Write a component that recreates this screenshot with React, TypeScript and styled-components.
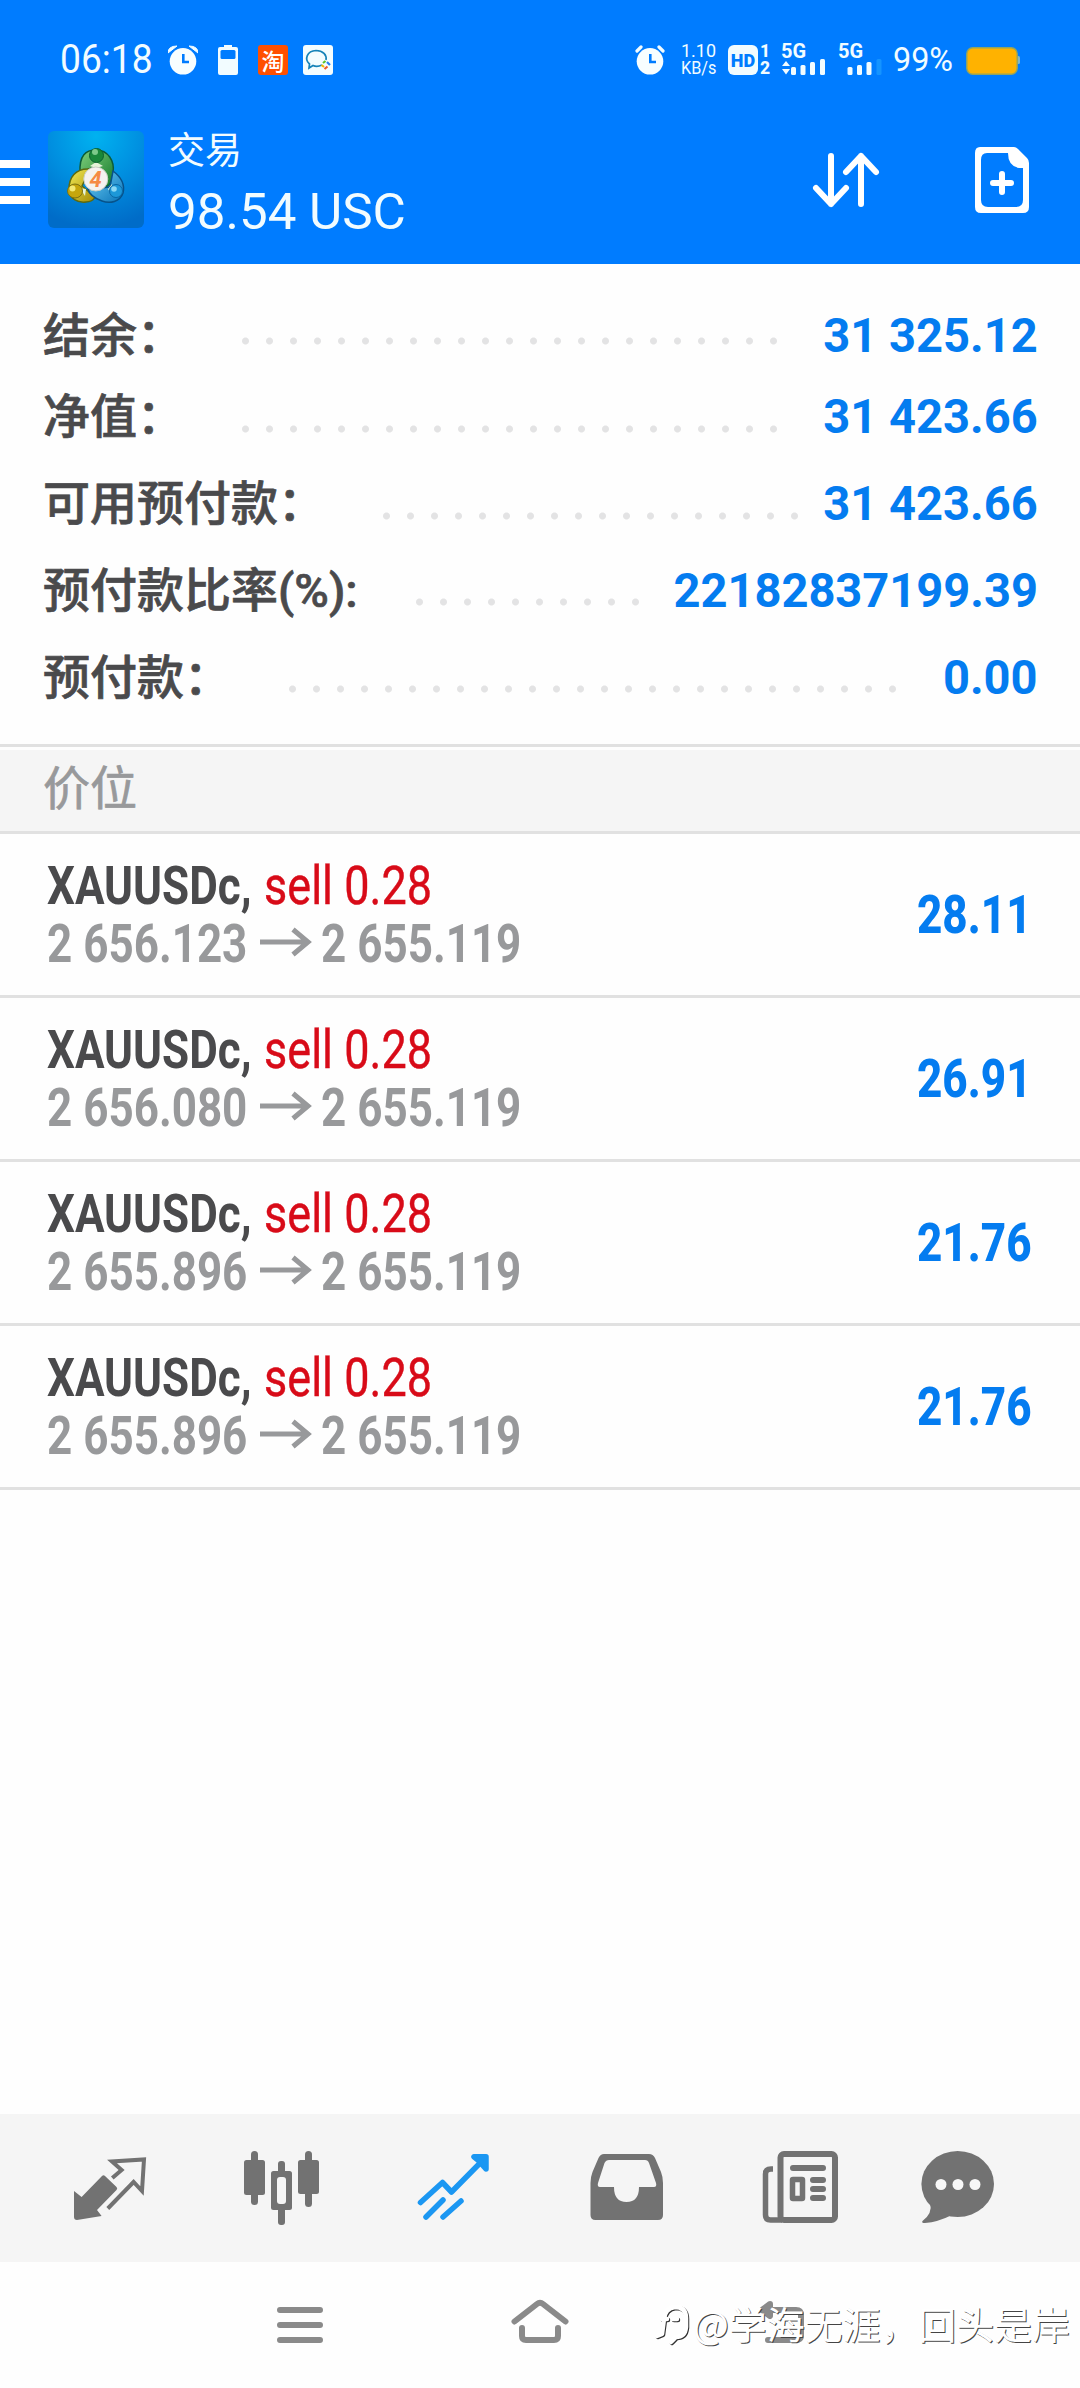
import React from "react";
import styled, { createGlobalStyle } from "styled-components";

const GlobalStyle = createGlobalStyle`
  * { box-sizing: border-box; }
  body { margin: 0; background: #fefefe; }
`;

const Screen = styled.div`
  position: relative;
  width: 1080px;
  height: 2388px;
  display: flex;
  flex-direction: column;
  background: #fefefe;
  overflow: hidden;
  font-family: Roboto, "Noto Sans CJK SC", sans-serif;
`;

const TopArea = styled.header`
  height: 264px;
  background: #007cff;
  color: #f2fcff;
  display: flex;
  flex-direction: column;
`;

const StatusBar = styled.div`
  height: 119px;
  padding: 0 60px 0 60px;
  display: flex;
  align-items: center;
  justify-content: space-between;
`;

const StatusGroup = styled.div`
  display: flex;
  align-items: center;
  height: 30px;
`;

const Fit = styled.span<{ $w: number; $sx?: number }>`
  display: block;
  width: ${(p) => p.$w}px;
  white-space: pre;
  transform: scaleX(${(p) => p.$sx ?? 1});
  transform-origin: left center;
`;

const Clock = styled(Fit)`
  font-size: 40px;
  line-height: 30px;
`;

const StatusIcon = styled.svg<{ $ml: number }>`
  display: block;
  flex: none;
  margin-left: ${(p) => p.$ml}px;
`;

const AppBadge = styled.div<{ $bg: string; $ml: number }>`
  width: 30px;
  height: 30px;
  margin-left: ${(p) => p.$ml}px;
  border-radius: 3px;
  background: ${(p) => p.$bg};
  display: flex;
  align-items: center;
  justify-content: center;
  font: 500 23px/30px "Noto Sans CJK SC", sans-serif;
  color: #fff;
`;

const Speed = styled.div`
  width: 47px;
  height: 34px;
  margin-left: 16px;
  font-size: 18.5px;
  line-height: 17px;
`;

const HdBadge = styled.div`
  width: 30px;
  height: 30px;
  border-radius: 6px;
  background: #f2fcff;
  color: #007cff;
  font: 900 18px/31px Roboto, sans-serif;
  display: flex;
  justify-content: center;
`;

const SimPair = styled.div`
  width: 23px;
  height: 34px;
  padding-left: 2px;
  font: 800 17.5px/17px Roboto, sans-serif;
  text-align: left;
`;

const Network = styled.div<{ $w: number }>`
  width: ${(p) => p.$w}px;
  height: 32px;
  display: flex;
  flex-direction: column;
  font: 700 20px/15px Roboto, sans-serif;
  svg { display: block; margin-top: 1px; overflow: visible; flex: none; }
`;

const Percent = styled(Fit)`
  font-size: 33px;
  line-height: 32px;
`;

const TitleBar = styled.div`
  height: 145px;
  display: flex;
  align-items: flex-start;
`;

const MenuButton = styled.div`
  width: 30px;
  margin-top: 41px;
  display: flex;
  flex-direction: column;
  gap: 10px;
  i { display: block; height: 8px; background: #fff; }
`;

const LogoSlot = styled.div`
  width: 96px;
  height: 97px;
  margin: 12px 0 0 18px;
`;

const TitleText = styled.div`
  flex: 1;
  padding: 6px 0 0 24px;
`;

const TitleName = styled.div`
  font: 400 37px/46px "Noto Sans CJK SC", sans-serif;
`;

const TitleSum = styled(Fit)`
  margin-top: 15px;
  font-size: 50px;
  line-height: 52px;
`;

const SortIcon = styled.svg`
  margin-top: 31px;
  margin-right: 93px;
`;

const DocIcon = styled.svg`
  margin-top: 27px;
  margin-right: 48px;
`;

const Summary = styled.section`
  height: 480px;
  padding: 31px 42px 0 43px;
`;

const SummaryRow = styled.div<{ $h: number }>`
  height: ${(p) => p.$h}px;
  display: flex;
  align-items: flex-start;
`;

const Label = styled.div`
  font-size: 47px;
  line-height: 82px;
  font-weight: 500;
  color: #4a4a4c;
  -webkit-text-stroke: 0.7px #4a4a4c;
  white-space: nowrap;
  height: 80px;
`;

const Dots = styled.div<{ $n: number; $top: number; $ml: number }>`
  flex: none;
  width: ${(p) => p.$n * 24}px;
  height: 8px;
  margin-top: ${(p) => p.$top}px;
  margin-left: ${(p) => p.$ml}px;
  background: radial-gradient(circle at 3.5px 4px, #e3e3e4 3px, transparent 4px) 0 0 / 24px 8px repeat-x;
`;

const Amount = styled.div`
  margin-left: auto;
  font-size: 48px;
  font-weight: 700;
  line-height: 82px;
  color: #047cf0;
  white-space: pre;
  transform: scaleX(0.98);
  transform-origin: right center;
`;

const SectionHead = styled.div`
  height: 90px;
  border-top: 3px solid #e1e1e1;
  border-bottom: 3px solid #e1e1e1;
  padding: 3px 0 0;
  background: #f5f5f5;
  background-clip: content-box;
  color: #98999b;
  font: 400 47px/69px "Noto Sans CJK SC", sans-serif;
  -webkit-text-stroke: 0.7px #98999b;
  span { display: block; margin-left: 43px; height: 70px; }
`;

const TradeRow = styled.div`
  height: 164px;
  border-bottom: 3px solid #e1e1e1;
  padding: 23px 42px 0 47px;
  display: flex;
  justify-content: space-between;
`;

const TradeText = styled.div`
  font-size: 53px;
  line-height: 58px;
  font-weight: 700;
`;

const TradeLine = styled.div`
  height: 58px;
  display: flex;
  align-items: center;
  color: #98999b;
`;

const Arrow = styled.svg`
  display: block;
  flex: none;
  margin: 0 8px 5px 0;
`;

const Symbol = styled(Fit)`
  color: #4a4a4c;
`;

const Side = styled(Fit)`
  color: #d80b18;
  font-weight: 400;
  -webkit-text-stroke: 0.4px #d80b18;
`;

const Profit = styled(Fit)`
  margin-top: 27px;
  font-size: 53px;
  font-weight: 800;
  line-height: 62px;
  color: #047cf0;
`;

const Spacer = styled.div`
  flex: 1;
`;

const TabBar = styled.nav`
  height: 148px;
  background: #f5f5f5;
  padding: 24px 0 0 62px;
  display: flex;
  gap: 76px;
  color: #727272;
  svg { display: block; flex: none; overflow: visible; }
`;

const SystemNav = styled.div`
  height: 126px;
  padding: 32px 0 0 270px;
  display: flex;
  gap: 180px;
  color: #8a8a8a;
  svg { display: block; flex: none; }
`;

const Watermark = styled.div`
  position: absolute;
  left: 654px;
  top: 2295px;
  height: 56px;
  display: flex;
  align-items: center;
  color: #fff;
  font: 400 37.9px/56px "Noto Sans CJK SC", sans-serif;
  white-space: nowrap;
  text-shadow: 1px 1px 0 #444;
  svg { display: block; }
`;

const Alarm = ({ ml, small }: { ml: number; small?: boolean }) => (
  <StatusIcon $ml={ml} width="30" height="30" viewBox="0 0 30 30">
    {small ? (
      <path d="M2 6 L6 2 M28 6 L24 2" stroke="#f2fcff" strokeWidth="3.2" strokeLinecap="round" />
    ) : (
      <path d="M0 8 Q0 1 9 1 Z M30 8 Q30 1 21 1 Z" fill="#f2fcff" stroke="#f2fcff" />
    )}
    <circle cx="15" cy="16.3" r={small ? 13.3 : 14} fill="#007cff" />
    <circle cx="15" cy="16.3" r="13.3" fill="#f8feff" />
    <path d="M15.3 9 V17 H21" fill="none" stroke="#007cff" strokeWidth="2.6" />
  </StatusIcon>
);

const Logo = () => (
  <svg width="96" height="97" viewBox="0 0 96 97">
    <defs>
      <radialGradient id="tile" cx="0.5" cy="0.05" r="0.95">
        <stop offset="0" stopColor="#00b2f0" />
        <stop offset="0.5" stopColor="#008fe0" />
        <stop offset="1" stopColor="#006cc8" />
      </radialGradient>
      <linearGradient id="green" x1="0" y1="0" x2="1" y2="1">
        <stop offset="0" stopColor="#7fd07c" />
        <stop offset="1" stopColor="#157a2c" />
      </linearGradient>
      <linearGradient id="gold" x1="0" y1="0" x2="1" y2="1">
        <stop offset="0" stopColor="#f2ea55" />
        <stop offset="1" stopColor="#a38a04" />
      </linearGradient>
      <linearGradient id="sky" x1="0" y1="0" x2="1" y2="1">
        <stop offset="0" stopColor="#6fd0f5" />
        <stop offset="1" stopColor="#0872b8" />
      </linearGradient>
    </defs>
    <rect width="96" height="97" rx="6" fill="url(#tile)" />
    <path d="M32 42 C31 24 38 19 48 19 C60 19 67 30 65 42 C64 52 60 56 56 56 L50 34 Z" fill="url(#green)" stroke="#0c5c38" strokeWidth="1.5" />
    <path d="M42 38 C27 37 21 47 21 58 C21 68 30 72 38 71 C44 71 46 68 47 66 L34 55 Z" fill="url(#gold)" stroke="#5c6a10" strokeWidth="1.5" />
    <path d="M65 40 C73 46 77 54 75 62 C72 71 62 73 54 70 C46 67 41 63 40 58 L62 56 Z" fill="url(#sky)" stroke="#07528a" strokeWidth="1.5" />
    <path d="M42 35 L48 31 L55 35 L48 37 Z M32 57 L38 58 L37 65 Z M60 58 L64 53 L63 63 Z" fill="#e4f3d8" />
    <circle cx="48.500" cy="24.500" r="7" fill="#19873a" stroke="#0c6030" />
    <circle cx="47" cy="21" r="3" fill="#7cc98a" />
    <ellipse cx="27" cy="60" rx="7.500" ry="7" fill="#c5a60c" stroke="#7b7110" />
    <circle cx="24.500" cy="57.500" r="3" fill="#f2e873" />
    <circle cx="68" cy="60" r="6.500" fill="#1d98d8" stroke="#0866a5" />
    <circle cx="66" cy="58" r="2.800" fill="#8ad8f5" />
    <circle cx="47.800" cy="48" r="12" fill="#f5f2f0" stroke="#c9cfc4" />
    <text x="47.500" y="56" textAnchor="middle" fontFamily="Roboto, sans-serif" fontSize="22" fontWeight="700" fontStyle="italic" fill="#f58a45">4</text>
  </svg>
);

const summary = [
  { label: "结余：", value: "31 325.12", h: 81, dots: 23, top: 42, ml: 58 },
  { label: "净值：", value: "31 423.66", h: 87, dots: 23, top: 49, ml: 58 },
  { label: "可用预付款：", value: "31 423.66", h: 87, dots: 18, top: 49, ml: 58 },
  { label: "预付款比率(%):", value: "22182837199.39", h: 87, dots: 10, top: 48, ml: 58 },
  { label: "预付款：", value: "0.00", h: 87, dots: 26, top: 48, ml: 58 },
];

const trades = [
  { open: "2 656.123", profit: "28.11" },
  { open: "2 656.080", profit: "26.91" },
  { open: "2 655.896", profit: "21.76" },
  { open: "2 655.896", profit: "21.76" },
];

export default function App() {
  return (
    <Screen>
      <GlobalStyle />
      <TopArea>
        <StatusBar>
          <StatusGroup>
            <Clock $w={92} $sx={0.93}>06:18</Clock>
            <Alarm ml={16} />
            <StatusIcon $ml={20} width="20" height="30" viewBox="0 0 20 30">
              <path d="M6 0 H14 V2 H18 Q20 2 20 4 V28 Q20 30 18 30 H2 Q0 30 0 28 V4 Q0 2 2 2 H6 Z" fill="#f2fcff" />
              <rect x="2.500" y="5" width="15" height="9" rx="1.500" fill="#007cff" />
            </StatusIcon>
            <AppBadge $bg="#ff5000" $ml={20}>淘</AppBadge>
            <AppBadge $bg="#f4fdff" $ml={15}>
              <svg width="30" height="30" viewBox="0 0 30 30">
                <path d="M19 20 Q14 22.500 10 20.500 L6 23 L6.500 19 C1 14 4 6 13 5.500 C20 5.500 24 10 23 15" fill="none" stroke="#1683b8" strokeWidth="1.700" />
                <path d="M20 18 L22.500 16" stroke="#5cc22c" strokeWidth="2.200" />
                <path d="M24 17 L27 20" stroke="#2a7ff0" strokeWidth="2.200" />
                <path d="M18.500 20 L21 22" stroke="#f5b400" strokeWidth="2.200" />
                <path d="M21.500 24 L24.500 21.500" stroke="#f0562c" strokeWidth="2.200" />
              </svg>
            </AppBadge>
          </StatusGroup>
          <StatusGroup>
            <Alarm ml={0} small />
            <Speed>
              <Fit $w={47} $sx={0.97}>1.10</Fit>
              <Fit $w={47} $sx={0.88}>KB/s</Fit>
            </Speed>
            <HdBadge>HD</HdBadge>
            <SimPair>
              <div>1</div>
              <div>2</div>
            </SimPair>
            <Network $w={57}>
              5G
              <svg width="45" height="15" viewBox="0 0 45 15" fill="#f2fcff">
                <path d="M5 1 L9 6 H1 Z M1 9 H9 L5 14.500 Z" />
                <rect x="10" y="7" width="5" height="8" rx="1.500" />
                <rect x="19.500" y="5" width="5" height="10" rx="1.500" />
                <rect x="29" y="2" width="5" height="13" rx="1.500" />
                <rect x="39" y="-1" width="5" height="16" rx="1.500" />
              </svg>
            </Network>
            <Network $w={55}>
              5G
              <svg width="45" height="15" viewBox="0 0 45 15" fill="#f2fcff">
                <rect x="9.500" y="7" width="5" height="8" rx="1.500" />
                <rect x="19" y="5" width="5" height="10" rx="1.500" />
                <rect x="28.500" y="2" width="5" height="13" rx="1.500" />
                <rect x="38.500" y="-1" width="5" height="16" rx="1.500" fill="#1594ff" />
              </svg>
            </Network>
            <Percent $w={73} $sx={0.98}>99%</Percent>
            <svg width="54" height="30" viewBox="0 0 54 30">
              <rect x="50" y="11" width="4" height="8" rx="1.500" fill="#7fb6c8" />
              <rect x="0.800" y="2.800" width="50.400" height="26.400" rx="6" fill="#ffb200" stroke="#93a45e" strokeWidth="1.400" />
            </svg>
          </StatusGroup>
        </StatusBar>
        <TitleBar>
          <MenuButton><i /><i /><i /></MenuButton>
          <LogoSlot><Logo /></LogoSlot>
          <TitleText>
            <TitleName>交易</TitleName>
            <TitleSum $w={240} $sx={1.022}>98.54 USC</TitleSum>
          </TitleText>
          <SortIcon width="72" height="60" viewBox="810 150 72 60" fill="none" stroke="#fff" strokeWidth="6" strokeLinecap="round" strokeLinejoin="round">
            <path d="M831 156 V204 M816 188 L831 204 L846 188" />
            <path d="M861 204 V156 M846 172 L861 156 L876 172" />
          </SortIcon>
          <DocIcon width="57" height="68" viewBox="975 146 57 68">
            <path fill="#fff" fillRule="evenodd" d="M980 147 H1014 Q1016 147 1018 149 L1027 158 Q1029 160 1029 163 V207 Q1029 213 1023 213 H981 Q975 213 975 207 V153 Q975 147 980 147 Z M987 153 Q981 153 981 160 V200 Q981 207 988 207 H1016 Q1023 207 1023 200 V168 H1019 Q1008 166 1008 153 Z" />
            <path d="M1002 174 V192 M993 183 H1011" stroke="#fff" strokeWidth="6" strokeLinecap="round" />
          </DocIcon>
        </TitleBar>
      </TopArea>

      <Summary>
        {summary.map((s) => (
          <SummaryRow key={s.label} $h={s.h}>
            <Label>{s.label}</Label>
            <Dots $n={s.dots} $top={s.top} $ml={s.ml} />
            <Amount>{s.value}</Amount>
          </SummaryRow>
        ))}
      </Summary>

      <SectionHead><span>价位</span></SectionHead>

      {trades.map((t, i) => (
        <TradeRow key={i}>
          <TradeText>
            <TradeLine>
              <Symbol $w={217} $sx={0.83}>XAUUSDc,</Symbol>
              <Side $w={170} $sx={0.85}>sell 0.28</Side>
            </TradeLine>
            <TradeLine>
              <Fit $w={212} $sx={0.83}>{t.open}</Fit>
              <Arrow width="54" height="32" viewBox="0 0 54 32" fill="none" stroke="#98999b" strokeWidth="5">
                <path d="M1 16 H50 M34 3.500 L49 16 L34 28.500" />
              </Arrow>
              <Fit $w={206} $sx={0.83}>2 655.119</Fit>
            </TradeLine>
          </TradeText>
          <Profit $w={121} $sx={0.83}>{t.profit}</Profit>
        </TradeRow>
      ))}

      <Spacer />

      <TabBar>
        <svg width="96" height="100" viewBox="62 2138 96 100">
          <path d="M74 2191 L81.600 2197 L102 2176 Q103.500 2174.500 105 2176 L116.500 2187 Q118 2188.500 116.500 2190 L97 2210 L101.600 2216 L77 2220 Q74 2220 74 2217 Z" fill="currentColor" />
          <path d="M112.300 2178 L121.600 2170 L112 2161.500 L144 2159.500 L142 2191 L133.600 2182 L107.800 2208.500" fill="none" stroke="currentColor" strokeWidth="4" />
        </svg>
        <svg width="96" height="100" viewBox="234 2138 96 100" fill="currentColor">
          <rect x="251" y="2151" width="7" height="54" rx="3.500" />
          <rect x="244" y="2160" width="21" height="35" rx="2.500" />
          <rect x="278" y="2161" width="7" height="64" rx="3" />
          <rect x="271" y="2171" width="21" height="39" rx="2.500" />
          <rect x="277" y="2177" width="9" height="27" rx="3" fill="#f5f5f5" />
          <rect x="305" y="2151" width="7" height="56" rx="3.500" />
          <rect x="298" y="2160" width="21" height="34" rx="2.500" />
        </svg>
        <svg width="96" height="100" viewBox="406 2138 96 100" fill="none" stroke="#1b97f2" strokeWidth="5.500" strokeLinecap="round" strokeLinejoin="round">
          <path d="M420.500 2202.500 L442.500 2182.500 L451.500 2192 L485 2158" />
          <path d="M474 2156.800 H486 V2169 L478 2160 Z" fill="#1b97f2" />
          <path d="M426 2217 L443 2200 M443 2217 L461 2201" />
        </svg>
        <svg width="96" height="100" viewBox="578 2138 96 100">
          <path fill="currentColor" fillRule="evenodd" d="M604 2154 H649 Q653 2154 655 2158 L661 2172 Q663 2177 663 2183 V2215 Q663 2220 658 2220 H595.500 Q590.500 2220 590.500 2215 V2183 Q590.500 2177 592.500 2172 L598.500 2158 Q600.500 2154 604 2154 Z M609 2160 Q606 2160 604.500 2163 L598 2183 Q597 2187 600 2187 H614 Q614 2202 626.500 2202 Q639 2202 639 2187 H654 Q657 2187 656 2183 L649 2163 Q648 2160 645 2160 Z" />
        </svg>
        <svg width="96" height="100" viewBox="750 2138 96 100" fill="none" stroke="currentColor" strokeWidth="6">
          <rect x="780.500" y="2154" width="54.500" height="66" rx="3.500" />
          <path d="M773 2169 H771 Q765.500 2169 765.500 2174 V2215 Q765.500 2220 770.500 2220 H782" strokeWidth="5.500" />
          <path d="M793 2168 H823 M813 2180 H823 M813 2189 H823 M813 2198 H823" strokeLinecap="round" />
          <rect x="792.500" y="2179.500" width="10" height="19" rx="0.500" strokeWidth="5.500" />
        </svg>
        <svg width="96" height="100" viewBox="922 2138 96 100" fill="currentColor">
          <ellipse cx="957.700" cy="2184" rx="36.300" ry="33" />
          <path d="M930 2203 Q933 2213 922.500 2221 Q921 2223 925 2223 Q938 2222 952 2215 Z" />
          <g fill="#f7f7f7">
            <circle cx="941" cy="2184.500" r="5.500" />
            <circle cx="958" cy="2184.500" r="5.500" />
            <circle cx="975" cy="2184.500" r="5.500" />
          </g>
        </svg>
      </TabBar>

      <SystemNav>
        <svg width="60" height="60" viewBox="270 2294 60 60" stroke="currentColor" strokeWidth="6" strokeLinecap="round">
          <path d="M280 2310 H320 M280 2325 H320 M280 2340 H320" />
        </svg>
        <svg width="60" height="60" viewBox="510 2294 60 60" fill="none" stroke="currentColor" strokeWidth="6" strokeLinecap="round" strokeLinejoin="round">
          <path d="M514.500 2321.500 L537 2304 Q540 2301.500 543 2304 L565.500 2321.500" />
          <path d="M522 2328 V2336 Q522 2340 526 2340 H554 Q558 2340 558 2336 V2328" />
        </svg>
        <svg width="60" height="60" viewBox="750 2294 60 60" fill="none" stroke="currentColor" strokeWidth="6" strokeLinecap="round" strokeLinejoin="round">
          <path d="M764 2310 H796 Q801 2310 801 2315 V2335 Q801 2340 796 2340 H768" />
          <path d="M770 2304 L762 2310 L770 2316 Z" fill="currentColor" />
        </svg>
      </SystemNav>

      <Watermark>
        <svg width="39" height="48" viewBox="0 0 39 48" fill="none" strokeLinecap="round" strokeLinejoin="round">
          <g stroke="#333" transform="translate(1 1)">
            <path strokeWidth="4.500" d="M3 37 L8 35 L10 20 Q11 9 21 8 Q32 8 32 19 V28 Q31 38 22 38 L17 43 M8 20 H13 M19 20 H23" />
          </g>
          <g stroke="#fff">
            <path strokeWidth="4.500" d="M3 37 L8 35 L10 20 Q11 9 21 8 Q32 8 32 19 V28 Q31 38 22 38 L17 43 M8 20 H13 M19 20 H23" />
          </g>
        </svg>
        <span>@学海无涯，回头是岸</span>
      </Watermark>
    </Screen>
  );
}
